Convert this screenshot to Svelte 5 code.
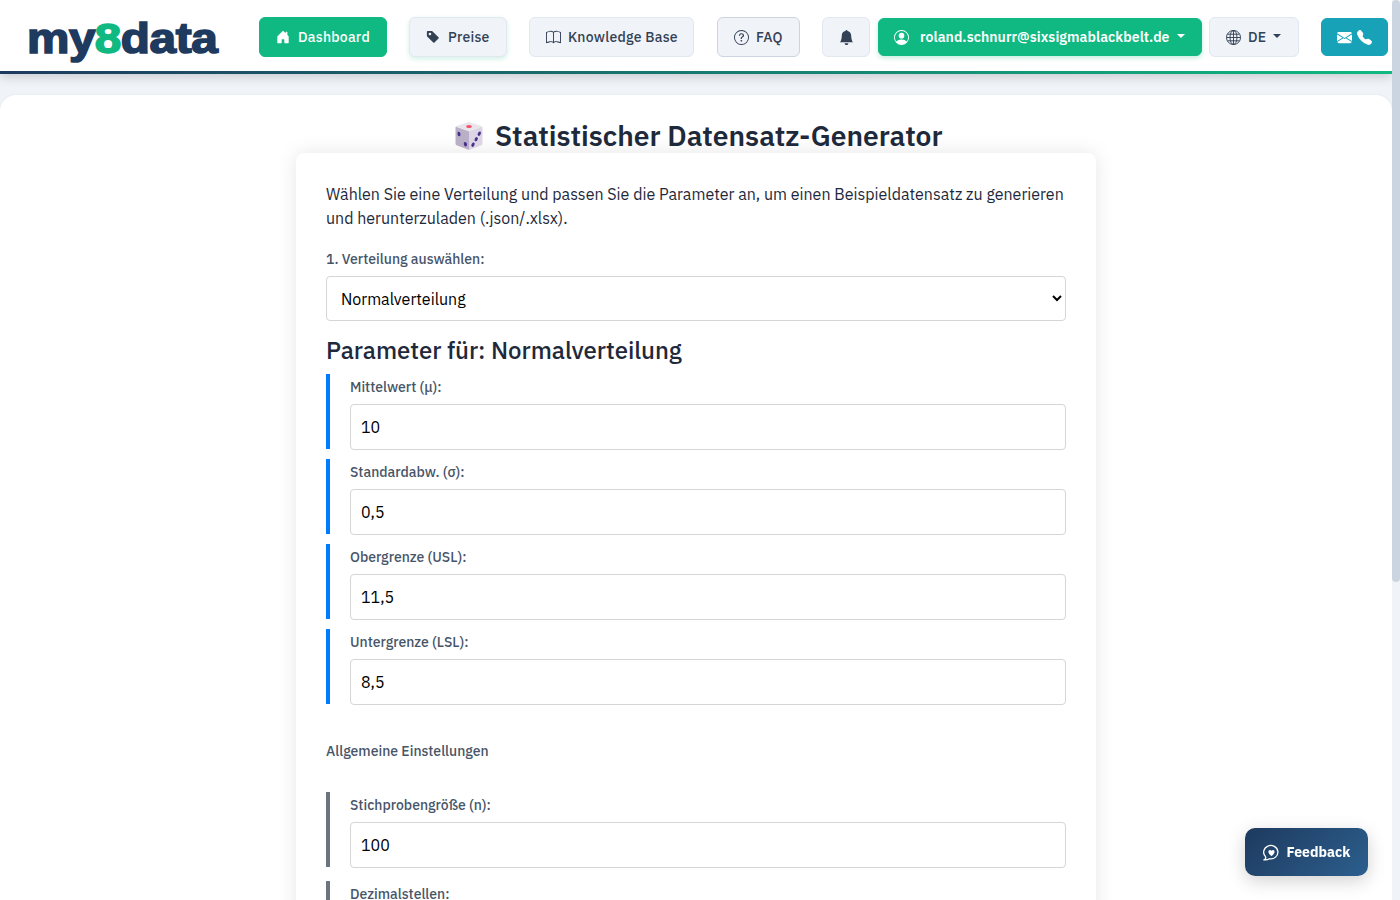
<script>
	let distribution = 'Normalverteilung';

	let params = [
		{ label: 'Mittelwert (μ):', value: '10' },
		{ label: 'Standardabw. (σ):', value: '0,5' },
		{ label: 'Obergrenze (USL):', value: '11,5' },
		{ label: 'Untergrenze (LSL):', value: '8,5' }
	];

	let general = [
		{ label: 'Stichprobengröße (n):', value: '100' },
		{ label: 'Dezimalstellen:', value: '2' }
	];
</script>

<header>
	<div class="logo"><div class="wordmark">my<span>8</span>data</div></div>
	<nav>
		<button class="nav-btn active dashboard">
			<svg viewBox="0 0 16 16"><path d="M6.5 14.5v-3.505c0-.245.25-.495.5-.495h2c.25 0 .5.25.5.5v3.5a.5.5 0 0 0 .5.5h4a.5.5 0 0 0 .5-.5v-7a.5.5 0 0 0-.146-.354L13 5.793V2.5a.5.5 0 0 0-.5-.5h-1a.5.5 0 0 0-.5.5v1.293L8.354 1.146a.5.5 0 0 0-.708 0l-6 6A.5.5 0 0 0 1.5 7.5v7a.5.5 0 0 0 .5.5h4a.5.5 0 0 0 .5-.5" /></svg>
			<span>Dashboard</span>
		</button>
		<button class="nav-btn preise">
			<svg viewBox="0 0 16 16"><path d="M2 1a1 1 0 0 0-1 1v4.586a1 1 0 0 0 .293.707l7 7a1 1 0 0 0 1.414 0l4.586-4.586a1 1 0 0 0 0-1.414l-7-7A1 1 0 0 0 6.586 1zm4 3.5a1.5 1.5 0 1 1-3 0 1.5 1.5 0 0 1 3 0" /></svg>
			<span>Preise</span>
		</button>
		<button class="nav-btn knowledge">
			<svg viewBox="0 0 16 16"><path d="M1 2.828c.885-.37 2.154-.769 3.388-.893 1.33-.134 2.458.063 3.112.752v9.746c-.935-.53-2.12-.603-3.213-.493-1.18.12-2.37.461-3.287.811zm7.5-.141c.654-.689 1.782-.886 3.112-.752 1.234.124 2.503.523 3.388.893v9.923c-.918-.35-2.107-.692-3.287-.81-1.094-.111-2.278-.039-3.213.492zM8 1.783C7.015.936 5.587.81 4.287.94c-1.514.153-3.042.672-3.994 1.105A.5.5 0 0 0 0 2.5v11a.5.5 0 0 0 .707.455c.882-.4 2.303-.881 3.68-1.02 1.409-.142 2.59.087 3.223.877a.5.5 0 0 0 .78 0c.633-.79 1.814-1.019 3.222-.877 1.378.139 2.8.62 3.681 1.02A.5.5 0 0 0 16 13.5v-11a.5.5 0 0 0-.293-.455c-.952-.433-2.48-.952-3.994-1.105C10.413.809 8.985.936 8 1.783" /></svg>
			<span>Knowledge Base</span>
		</button>
		<button class="nav-btn faq">
			<svg viewBox="0 0 16 16"><path d="M8 15A7 7 0 1 1 8 1a7 7 0 0 1 0 14m0 1A8 8 0 1 0 8 0a8 8 0 0 0 0 16" /><path d="M5.255 5.786a.237.237 0 0 0 .241.247h.825c.138 0 .248-.113.266-.25.09-.656.54-1.134 1.342-1.134.686 0 1.314.343 1.314 1.168 0 .635-.374.927-.965 1.371-.673.489-1.206 1.06-1.168 1.987l.003.217a.25.25 0 0 0 .25.246h.811a.25.25 0 0 0 .25-.25v-.105c0-.718.273-.927 1.01-1.486.609-.463 1.244-.977 1.244-2.056 0-1.511-1.276-2.241-2.673-2.241-1.267 0-2.655.59-2.75 2.286m1.557 5.763c0 .533.425.927 1.01.927.609 0 1.028-.394 1.028-.927 0-.552-.42-.94-1.029-.94-.584 0-1.009.388-1.009.94" /></svg>
			<span>FAQ</span>
		</button>
		<button class="nav-btn bell" aria-label="Benachrichtigungen">
			<svg viewBox="0 0 16 16"><path d="M8 16a2 2 0 0 0 2-2H6a2 2 0 0 0 2 2m.995-14.901a1 1 0 1 0-1.99 0A5 5 0 0 0 3 6c0 1.098-.5 6-2 7h14c-1.5-1-2-5.902-2-7 0-2.42-1.72-4.44-4.005-4.901" /></svg>
		</button>
		<button class="nav-btn active user">
			<svg viewBox="0 0 16 16"><path d="M11 6a3 3 0 1 1-6 0 3 3 0 0 1 6 0" /><path fill-rule="evenodd" d="M0 8a8 8 0 1 1 16 0A8 8 0 0 1 0 8m8-7a7 7 0 0 0-5.468 11.37C3.242 11.226 4.805 10 8 10s4.757 1.225 5.468 2.37A7 7 0 0 0 8 1" /></svg>
			<span>roland.schnurr@sixsigmablackbelt.de</span>
			<i class="caret"></i>
		</button>
		<button class="nav-btn lang">
			<svg viewBox="0 0 16 16" class="line"><circle cx="8" cy="8" r="7.5" /><ellipse cx="8" cy="8" rx="3.7" ry="7.5" /><path d="M8 .5v15M.5 8h15M1.7 4.5h12.6M1.7 11.5h12.6" /></svg>
			<span>DE</span>
			<i class="caret"></i>
		</button>
		<button class="nav-btn contact" aria-label="Kontakt">
			<svg viewBox="0 0 16 16"><path d="M.05 3.555A2 2 0 0 1 2 2h12a2 2 0 0 1 1.95 1.555L8 8.414zM0 4.697v7.104l5.803-3.558zM6.761 8.83l-6.57 4.027A2 2 0 0 0 2 14h12a2 2 0 0 0 1.808-1.144l-6.57-4.027L8 9.586zm3.436-.586L16 11.801V4.697z" /></svg>
			<svg viewBox="0 0 16 16"><path d="M1.885.511a1.745 1.745 0 0 1 2.61.163L6.29 2.98c.329.423.445.974.315 1.494l-.547 2.19a.68.68 0 0 0 .178.643l2.457 2.457a.68.68 0 0 0 .644.178l2.189-.547a1.75 1.75 0 0 1 1.494.315l2.306 1.794c.829.645.905 1.87.163 2.611l-1.034 1.034c-.74.74-1.846 1.065-2.877.702a18.6 18.6 0 0 1-7.01-4.42 18.6 18.6 0 0 1-4.42-7.009c-.362-1.03-.037-2.137.703-2.877z" /></svg>
		</button>
	</nav>
</header>

<main>
	<h1>
		<svg class="dice" viewBox="0 0 30 30">
			<path d="M2 5.5 15 10v19L2.5 24.2q-1-.5-1-1.7v-16z" fill="#b9afc7" />
			<path d="M28 5.5 15 10v19l12.5-4.8q1-.5 1-1.7v-16z" fill="#ddd5e6" />
			<path d="M15 1 27.5 5q1 .5 0 1.1L15 10.5 2.5 6.1q-1-.6 0-1.1z" fill="#e8e6ea" />
			<ellipse cx="15" cy="5.6" rx="2.9" ry="1.5" fill="#f5506e" />
			<g fill="#47318a">
				<ellipse cx="5" cy="13" rx="1.5" ry="2.3" transform="rotate(-15 5 13)" />
				<ellipse cx="11.4" cy="23.2" rx="1.6" ry="2.3" transform="rotate(-15 11.4 23.2)" />
				<ellipse cx="25.3" cy="12.7" rx="1.5" ry="2.3" transform="rotate(25 25.3 12.7)" />
				<ellipse cx="22.2" cy="18.2" rx="1.5" ry="2.2" transform="rotate(25 22.2 18.2)" />
				<ellipse cx="19" cy="23.7" rx="1.5" ry="2.3" transform="rotate(25 19 23.7)" />
			</g>
		</svg>
		<span>Statistischer Datensatz-Generator</span>
	</h1>

	<section class="card">
		<p>
			Wählen Sie eine Verteilung und passen Sie die Parameter an, um einen Beispieldatensatz zu generieren
			und herunterzuladen (.json/.xlsx).
		</p>

		<label for="distribution">1. Verteilung auswählen:</label>
		<select id="distribution" bind:value={distribution}>
			<option>Normalverteilung</option>
		</select>

		<h2>Parameter für: {distribution}</h2>

		<div class="params">
			{#each params as param, i}
				<div class="param">
					<label for="param-{i}">{param.label}</label>
					<input id="param-{i}" type="text" bind:value={param.value} />
				</div>
			{/each}
		</div>

		<h3>Allgemeine Einstellungen</h3>

		<div class="params general">
			{#each general as param, i}
				<div class="param">
					<label for="general-{i}">{param.label}</label>
					<input id="general-{i}" type="text" bind:value={param.value} />
				</div>
			{/each}
		</div>
	</section>
</main>

<button class="feedback">
	<svg viewBox="0 0 16 16"><path class="bubble" d="M1.2 14.9c1.3-.8 1.7-1.9 1.1-3A6.7 6.3 0 1 1 6 13.9c-1.3.8-2.9 1.2-4.8 1z" /><path d="M8 11.3C2.8 7.9 5.7 4.1 8 6.3c2.3-2.2 5.2 1.6 0 5z" /></svg>
	<span>Feedback</span>
</button>

<!-- Scrollbar -->
<div class="scrollbar"><div class="thumb"></div></div>

<style>
	:global(body) {
		background: #f0f3f8;
		font-family: 'IBM Plex Sans', Roboto, 'Noto Sans', sans-serif;
		color: #1e293b;
		height: 900px;
		overflow: hidden;
	}

	header {
		position: relative;
		box-sizing: border-box;
		width: 1392px;
		height: 74px;
		display: flex;
		align-items: flex-start;
		background: #fff;
		border-bottom: 3px solid;
		border-image: linear-gradient(90deg, #1e3a5f, #10b981) 1;
		box-shadow: 0 3px 10px rgba(0, 0, 0, 0.17);
	}

	.logo {
		box-sizing: border-box;
		width: 259px;
		padding: 14.5px 0 0 26.5px;
	}

	.wordmark {
		width: 175px;
		font: bold 42px/48px 'Liberation Sans', Arial, sans-serif;
		letter-spacing: -0.3px;
		color: #1e3a5f;
		-webkit-text-stroke: 1.6px currentColor;
		white-space: nowrap;
		transform: scaleX(1.135);
		transform-origin: left;
	}

	.wordmark span {
		margin-left: -0.5px;
		color: #10b981;
	}

	nav {
		display: flex;
		align-items: center;
		padding-top: 17px;
	}

	.nav-btn {
		box-sizing: border-box;
		height: 40px;
		display: flex;
		align-items: center;
		padding: 0 0 0 16px;
		border: 1px solid #e2e8f0;
		border-radius: 6px;
		background: #f0f3f8;
		color: #334155;
		font-family: inherit;
		font-size: 14px;
		font-weight: 500;
		letter-spacing: 0.25px;
		white-space: nowrap;
	}

	.nav-btn svg {
		flex: none;
		width: 15px;
		height: 15px;
		margin-right: 7px;
		fill: currentColor;
	}

	.nav-btn svg.line {
		fill: none;
		stroke: currentColor;
	}

	.nav-btn.active {
		background: #10b981;
		border-color: #10b981;
		color: #fff;
	}

	.dashboard {
		width: 128px;
		margin-right: 22px;
	}

	.preise {
		width: 98px;
		margin-right: 22px;
		box-shadow: 0 2px 5px rgba(16, 185, 129, 0.2);
	}

	.dashboard svg,
	.preise svg {
		width: 14px;
		height: 14px;
		margin-right: 8px;
	}

	.knowledge {
		width: 165px;
		margin-right: 23px;
	}

	.faq {
		width: 83px;
		margin-right: 22px;
		border-color: #cbd5e1;
	}

	.bell {
		width: 48px;
		margin-right: 8px;
	}

	.nav-btn.user {
		width: 324px;
		height: 38px;
		margin-right: 7px;
		padding-left: 15px;
		box-shadow: 0 2px 5px rgba(16, 185, 129, 0.25);
		font-weight: 600;
		letter-spacing: 0.08px;
	}

	.user svg {
		margin-right: 11px;
	}

	.lang {
		width: 90px;
		margin-right: 22px;
	}

	.nav-btn.contact {
		width: 67px;
		height: 38px;
		padding-left: 15px;
		background: #17a2b8;
		border-color: #17a2b8;
		color: #fff;
	}

	.contact svg {
		margin-right: 5px;
	}

	.caret {
		margin-left: 7px;
		margin-bottom: 2px;
		border: 4.5px solid transparent;
		border-top-color: currentColor;
		border-bottom: 0;
	}

	main {
		box-sizing: border-box;
		width: 1392px;
		height: 806px;
		margin-top: 20.5px;
		padding-top: 24.5px;
		border-radius: 16px 16px 0 0;
		background: #fff;
		box-shadow: 0 0 3px rgba(0, 0, 0, 0.06);
		overflow: hidden;
	}

	h1 {
		height: 34px;
		margin: 0;
		padding-left: 454px;
		display: flex;
		align-items: center;
		font-size: 28.2px;
		font-weight: 600;
		line-height: 34px;
		white-space: nowrap;
	}

	.dice {
		width: 30px;
		height: 30px;
		margin-right: 11px;
	}

	.card {
		box-sizing: border-box;
		width: 800px;
		height: 900px;
		margin: 0 auto;
		padding: 29px 30px 0;
		border-radius: 8px;
		background: #fff;
		box-shadow: 0 0 20px rgba(0, 0, 0, 0.1);
	}

	p {
		margin: 0 0 19px;
		font-size: 16px;
		line-height: 24px;
	}

	label,
	h3 {
		display: block;
		margin: 0;
		color: #475569;
		font-size: 14px;
		font-weight: 500;
		line-height: 20px;
	}

	select,
	input {
		display: block;
		box-sizing: border-box;
		width: 100%;
		height: 45px;
		padding: 10px;
		border: 1px solid #d3d5d8;
		border-radius: 4px;
		background: #fff;
		color: #000;
		font-family: inherit;
		font-size: 16px;
	}

	select {
		margin-top: 7px;
	}

	h2 {
		height: 30px;
		margin: 14px 0 9px;
		font-size: 24px;
		font-weight: 500;
		line-height: 30px;
		letter-spacing: -0.05px;
	}

	.params {
		display: flex;
		flex-direction: column;
		gap: 10px;
	}

	.param {
		box-sizing: border-box;
		height: 75px;
		padding: 3px 0 0 20px;
		border-left: 4px solid #007bff;
	}

	.param input {
		margin-top: 7px;
		height: 45.5px;
	}

	h3 {
		margin: 37px 0 31px;
	}

	.general {
		gap: 14px;
	}

	.general .param {
		border-left-color: #6c757d;
	}

	.feedback {
		position: fixed;
		left: 1244.5px;
		top: 828px;
		width: 123.5px;
		height: 48px;
		display: flex;
		align-items: center;
		padding: 0 0 0 18px;
		border: 0;
		border-radius: 10px;
		background: linear-gradient(135deg, #1e3a5f, #2c5f8d);
		box-shadow: 0 5px 18px rgba(0, 0, 0, 0.18);
		color: #fff;
		font-family: inherit;
		font-size: 14px;
		font-weight: 700;
	}

	.feedback svg {
		width: 17px;
		height: 17px;
		margin-right: 7px;
		fill: currentColor;
	}

	.feedback .bubble {
		fill: none;
		stroke: currentColor;
		stroke-width: 1.2;
	}

	.scrollbar {
		position: fixed;
		top: 0;
		right: 0;
		width: 8px;
		height: 900px;
		background: #f0f3f8;
	}

	.thumb {
		height: 582px;
		border-radius: 4px;
		background: #cbd5e1;
	}
</style>
